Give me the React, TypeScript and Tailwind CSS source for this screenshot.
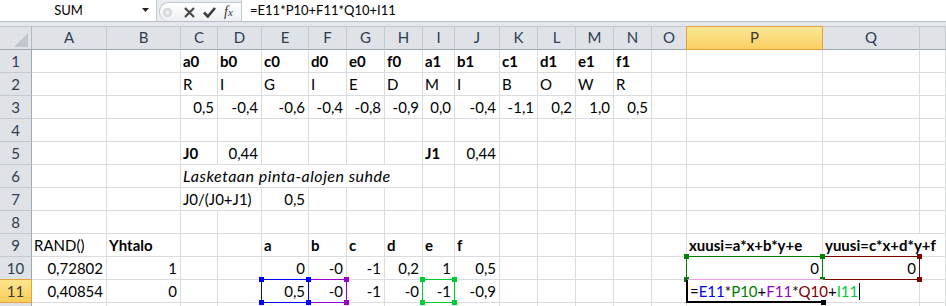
import React from 'react';

type Spec = {
  t?: string;
  r?: boolean;
  b?: boolean;
  i?: boolean;
  span?: 2 | 6;
  box?: 'blue' | 'purple' | 'lime' | 'green' | 'maroon';
  edit?: boolean;
};

const COLS = ['A', 'B', 'C', 'D', 'E', 'F', 'G', 'H', 'I', 'J', 'K', 'L', 'M', 'N', 'O', 'P', 'Q', 'R'];

const SPAN: Record<number, string> = { 2: 'col-span-2', 6: 'col-span-6' };

const BOX: Record<string, { border: string; bg: string; z: string }> = {
  blue: { border: 'border-[#0000ff]', bg: 'bg-[#0000ff]', z: 'z-20' },
  purple: { border: 'border-[#9900cc]', bg: 'bg-[#9900cc]', z: 'z-10' },
  lime: { border: 'border-[#00cc33]', bg: 'bg-[#00cc33]', z: 'z-10' },
  green: { border: 'border-[#008000]', bg: 'bg-[#008000]', z: 'z-20' },
  maroon: { border: 'border-[#800000]', bg: 'bg-[#800000]', z: 'z-10' },
};

const bold = (t: string): Spec => ({ t, b: true });
const num = (t: string): Spec => ({ t, r: true });
const txt = (t: string): Spec => ({ t });

const ROWS: Record<string, Spec>[] = [
  {
    C: bold('a0'), D: bold('b0'), E: bold('c0'), F: bold('d0'), G: bold('e0'), H: bold('f0'),
    I: bold('a1'), J: bold('b1'), K: bold('c1'), L: bold('d1'), M: bold('e1'), N: bold('f1'),
  },
  {
    C: txt('R'), D: txt('I'), E: txt('G'), F: txt('I'), G: txt('E'), H: txt('D'),
    I: txt('M'), J: txt('I'), K: txt('B'), L: txt('O'), M: txt('W'), N: txt('R'),
  },
  {
    C: num('0,5'), D: num('-0,4'), E: num('-0,6'), F: num('-0,4'), G: num('-0,8'), H: num('-0,9'),
    I: num('0,0'), J: num('-0,4'), K: num('-1,1'), L: num('0,2'), M: num('1,0'), N: num('0,5'),
  },
  {},
  { C: bold('J0'), D: num('0,44'), I: bold('J1'), J: num('0,44') },
  { C: { t: 'Lasketaan pinta-alojen suhde', i: true, span: 6 } },
  { C: { t: 'J0/(J0+J1)', span: 2 }, E: num('0,5') },
  {},
  {
    A: txt('RAND()'), B: bold('Yhtalo'), E: bold('a'), F: bold('b'), G: bold('c'), H: bold('d'),
    I: bold('e'), J: bold('f'), P: bold('xuusi=a*x+b*y+e'), Q: { t: 'yuusi=c*x+d*y+f', b: true, span: 2 },
  },
  {
    A: num('0,72802'), B: num('1'), E: num('0'), F: num('-0'), G: num('-1'), H: num('0,2'),
    I: num('1'), J: num('0,5'), P: { t: '0', r: true, box: 'green' }, Q: { t: '0', r: true, box: 'maroon' },
  },
  {
    A: num('0,40854'), B: num('0'), E: { t: '0,5', r: true, box: 'blue' }, F: { t: '-0', r: true, box: 'purple' },
    G: num('-1'), H: num('-0'), I: { t: '-1', r: true, box: 'lime' }, J: num('-0,9'), P: { edit: true },
  },
];

function RangeBox({ kind }: { kind: string }) {
  const k = BOX[kind];
  return (
    <div className={`pointer-events-none absolute -inset-px border ${k.border} ${k.z}`}>
      <div className={`absolute -left-[3px] -top-[3px] size-[5px] ${k.bg}`} />
      <div className={`absolute -right-[3px] -top-[3px] size-[5px] ${k.bg}`} />
      <div className={`absolute -left-[3px] -bottom-[3px] size-[5px] ${k.bg}`} />
      <div className={`absolute -right-[3px] -bottom-[3px] size-[5px] ${k.bg}`} />
    </div>
  );
}

function EditBox() {
  return (
    <>
      <div className="pointer-events-none absolute left-0 top-0 z-20 flex h-full items-center whitespace-nowrap bg-white pl-[3px] pr-[2px] leading-[22px]">
        <span className="text-black">=</span>
        <span className="text-[#0000ff]">E11</span>
        <span className="text-black">*</span>
        <span className="text-[#008000]">P10</span>
        <span className="text-black">+</span>
        <span className="text-[#9900cc]">F11</span>
        <span className="text-black">*</span>
        <span className="text-[#800000]">Q10</span>
        <span className="text-black">+</span>
        <span className="text-[#00cc33]">I11</span>
        <span className="ml-[1px] inline-block h-[17px] w-px bg-black" />
      </div>
      <div className="pointer-events-none absolute -inset-px z-30 border-b-2 border-l-2 border-t border-b-black border-l-black border-t-[#e9a0e6]">
        <div className="absolute -bottom-[4px] -right-[3px] size-[5px] bg-black" />
      </div>
    </>
  );
}

function Cell({ spec }: { spec?: Spec }) {
  const s = spec || {};
  const cls = [
    'h-[23px] border-b border-r border-[#dadcdd] bg-white leading-[22px] whitespace-nowrap text-black',
    s.span ? SPAN[s.span] : '',
    s.r ? 'text-right pr-[3px]' : 'pl-[2px]',
    s.b ? 'font-bold' : '',
    s.i ? 'italic text-[16px] tracking-[0.5px]' : 'text-[15px]',
    s.box || s.edit ? 'relative' : '',
  ].join(' ');
  return (
    <div className={cls}>
      {s.t}
      {s.box ? <RangeBox kind={s.box} /> : null}
      {s.edit ? <EditBox /> : null}
    </div>
  );
}

function FormulaBar() {
  return (
    <div className="flex h-[22px] border-b border-[#b8bdc4] bg-white">
      <div className="flex w-[157px] items-center border-r border-[#c5cad0]">
        <span className="w-[137px] text-center text-[13px] text-black">SUM</span>
        <svg width="8" height="5" viewBox="0 0 8 5" className="ml-[5px]">
          <path d="M0 0 H7 L3.5 4 Z" fill="#222" />
        </svg>
      </div>
      <div className="flex w-[84px] items-end bg-[#e9ecf0]">
        <div className="ml-[2px] flex h-[19px] flex-1 items-center rounded-l-[10px] border border-r-0 border-b-0 border-[#c3c8cf] bg-linear-to-b from-white to-[#eef0f3]">
          <div className="ml-[3px] size-[9px] rounded-full bg-radial from-[#f4f5f7] to-[#b9bec6]" />
          <svg width="11" height="11" viewBox="0 0 11 11" className="ml-[12px]">
            <path d="M1 1 L10 10 M10 1 L1 10" stroke="#4a4a4a" strokeWidth="2.2" />
          </svg>
          <svg width="13" height="11" viewBox="0 0 13 11" className="ml-[8px]">
            <path d="M1 5.5 L4.8 9.5 L12 1" stroke="#3c3c3c" strokeWidth="2.6" fill="none" />
          </svg>
          <span className="ml-[8px] font-['Liberation_Serif',serif] text-[14px] italic leading-none text-[#3a3a3a]">
            f<span className="text-[11px]">x</span>
          </span>
        </div>
      </div>
      <div className="flex flex-1 items-center border-l border-[#c5cad0] pl-[8px] text-[13px] text-black">
        =E11*P10+F11*Q10+I11
      </div>
    </div>
  );
}

export default function App() {
  return (
    <div className="h-[306px] w-[946px] overflow-hidden bg-[#e4e7eb] font-[Lato,sans-serif]">
      <FormulaBar />
      <div className="h-[4px] bg-[#e4e7eb]" />
      <div className="grid grid-cols-[32px_75px_74px_37px_44px_47px_38px_38px_38px_32px_45px_38px_38px_38px_38px_35px_136px_97px_1fr]">
        {/* header row */}
        <div className="relative h-[24px] border-b border-r border-t border-b-[#9ea6b0] border-r-[#b4bac2] border-t-[#c4c9cf] bg-[#dfe3e8]">
          <svg width="14" height="14" viewBox="0 0 14 14" className="absolute bottom-[2px] right-[3px]">
            <path d="M14 0 V14 H0 Z" fill="#c3c7cd" />
          </svg>
        </div>
        {COLS.map((c) =>
          c === 'P' ? (
            <div
              key={c}
              className="relative h-[24px] border-b border-r border-t border-[#e2a43e] bg-linear-to-b from-[#fde896] to-[#f9cf5f] text-center text-[15px] leading-[20px] text-[#3b3b3b]"
            >
              <div className="absolute -left-px -top-px h-[24px] w-px bg-[#e2a43e]" />
              {c}
            </div>
          ) : (
            <div
              key={c}
              className="h-[24px] border-b border-r border-t border-b-[#9ea6b0] border-r-[#c4c9cf] border-t-[#c4c9cf] bg-[#dfe3e8] text-center text-[15px] leading-[20px] text-[#2f3d4f]"
            >
              {c === 'R' ? '' : c}
            </div>
          )
        )}
        {ROWS.map((row, ri) => {
          const cells: React.ReactNode[] = [];
          const sel = ri === 10;
          cells.push(
            <div
              key="h"
              className={
                sel
                  ? 'relative h-[23px] border-b border-r border-[#e2a43e] bg-linear-to-b from-[#fde48a] to-[#f9cd5c] text-center text-[15px] leading-[22px] text-[#3b3b3b]'
                  : 'h-[23px] border-b border-r border-b-[#c4c9cf] border-r-[#9ea6b0] bg-[#dfe3e8] text-center text-[15px] leading-[22px] text-[#2f3d4f]'
              }
            >
              {sel ? <div className="absolute -top-px left-0 h-px w-full bg-[#e2a43e]" /> : null}
              {ri + 1}
            </div>
          );
          let skip = 0;
          COLS.forEach((c) => {
            if (skip > 0) {
              skip--;
              return;
            }
            const spec = row[c];
            if (spec && spec.span) skip = spec.span - 1;
            cells.push(<Cell key={c} spec={spec} />);
          });
          return <React.Fragment key={ri}>{cells}</React.Fragment>;
        })}
        {/* partial row 12 */}
        <div className="h-[3px] border-r border-r-[#9ea6b0] bg-[#dfe3e8]" />
        {COLS.map((c) => (
          <div key={c} className="h-[3px] border-r border-[#dadcdd] bg-white" />
        ))}
      </div>
    </div>
  );
}
